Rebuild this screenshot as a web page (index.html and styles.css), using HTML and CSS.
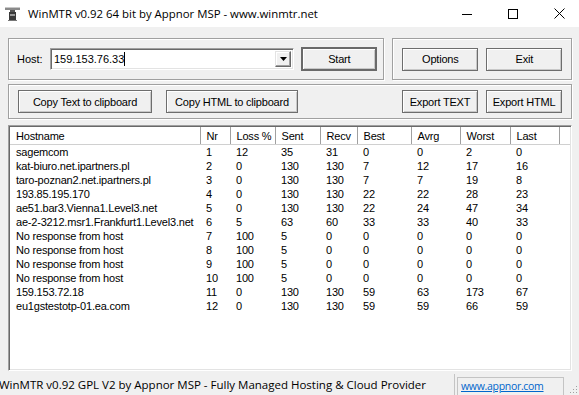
FILE: index.html
```html
<!DOCTYPE html>
<html lang="en">
<head>
    <meta charset="UTF-8">
    <title>WinMTR</title>
    <link rel="stylesheet" href="styles.css">
</head>
<body>

    <!-- Title Bar -->
    <div class="titlebar">
        <svg class="app-icon" viewBox="0 0 16 16">
            <rect x="0" y="1" width="15" height="3" fill="#8a8a8a"/>
            <rect x="0" y="1" width="15" height="1" fill="#c8c8c8"/>
            <rect x="5" y="4" width="5" height="2" fill="#555"/>
            <rect x="4" y="6" width="7" height="8" fill="#3a3a3a"/>
            <rect x="5" y="8" width="5" height="2" fill="#9a9a9a"/>
            <rect x="3" y="14" width="9" height="1" fill="#777"/>
        </svg>
        <span class="title">WinMTR v0.92 64 bit by Appnor MSP - www.winmtr.net</span>
        <div class="controls">
            <span class="ctrl">
                <svg width="10" height="10" viewBox="0 0 10 10"><rect x="0" y="5" width="10" height="1" fill="#000"/></svg>
            </span>
            <span class="ctrl">
                <svg width="10" height="10" viewBox="0 0 10 10"><rect x="0.5" y="0.5" width="9" height="9" fill="none" stroke="#000"/></svg>
            </span>
            <span class="ctrl">
                <svg width="11" height="11" viewBox="0 0 11 11"><path d="M0.5 0.5 L10.5 10.5 M10.5 0.5 L0.5 10.5" stroke="#000" stroke-width="1"/></svg>
            </span>
        </div>
    </div>

    <div class="main">
        <div class="top-row">
            <div class="group host-group">
                <span class="host-label">Host:</span>
                <div class="combo">
                    <span class="combo-text">159.153.76.33<span class="caret"></span></span>
                    <span class="combo-btn">
                        <svg width="7" height="4" viewBox="0 0 7 4"><path d="M0 0 H7 L3.5 4 Z" fill="#000"/></svg>
                    </span>
                </div>
                <button class="btn default">Start</button>
            </div>
            <div class="group action-group">
                <button class="btn">Options</button>
                <button class="btn">Exit</button>
            </div>
        </div>

        <div class="group export-group">
            <button class="btn copy-text">Copy Text to clipboard</button>
            <button class="btn copy-html">Copy HTML to clipboard</button>
            <span class="spacer"></span>
            <button class="btn">Export TEXT</button>
            <button class="btn">Export HTML</button>
        </div>

        <!-- Trace results -->
        <div class="listview">
            <table class="report">
                <colgroup>
                    <col class="c-host"><col class="c-nr"><col class="c-loss"><col class="c-sent"><col class="c-recv">
                    <col class="c-best"><col class="c-avrg"><col class="c-worst"><col class="c-last"><col>
                </colgroup>
                <thead>
                    <tr>
                        <th>Hostname</th><th>Nr</th><th>Loss %</th><th>Sent</th><th>Recv</th>
                        <th>Best</th><th>Avrg</th><th>Worst</th><th>Last</th><th class="filler"></th>
                    </tr>
                </thead>
                <tbody>
                    <tr><td>sagemcom</td><td>1</td><td>12</td><td>35</td><td>31</td><td>0</td><td>0</td><td>2</td><td>0</td><td></td></tr>
                    <tr><td>kat-biuro.net.ipartners.pl</td><td>2</td><td>0</td><td>130</td><td>130</td><td>7</td><td>12</td><td>17</td><td>16</td><td></td></tr>
                    <tr><td>taro-poznan2.net.ipartners.pl</td><td>3</td><td>0</td><td>130</td><td>130</td><td>7</td><td>7</td><td>19</td><td>8</td><td></td></tr>
                    <tr><td>193.85.195.170</td><td>4</td><td>0</td><td>130</td><td>130</td><td>22</td><td>22</td><td>28</td><td>23</td><td></td></tr>
                    <tr><td>ae51.bar3.Vienna1.Level3.net</td><td>5</td><td>0</td><td>130</td><td>130</td><td>22</td><td>24</td><td>47</td><td>34</td><td></td></tr>
                    <tr><td>ae-2-3212.msr1.Frankfurt1.Level3.net</td><td>6</td><td>5</td><td>63</td><td>60</td><td>33</td><td>33</td><td>40</td><td>33</td><td></td></tr>
                    <tr><td>No response from host</td><td>7</td><td>100</td><td>5</td><td>0</td><td>0</td><td>0</td><td>0</td><td>0</td><td></td></tr>
                    <tr><td>No response from host</td><td>8</td><td>100</td><td>5</td><td>0</td><td>0</td><td>0</td><td>0</td><td>0</td><td></td></tr>
                    <tr><td>No response from host</td><td>9</td><td>100</td><td>5</td><td>0</td><td>0</td><td>0</td><td>0</td><td>0</td><td></td></tr>
                    <tr><td>No response from host</td><td>10</td><td>100</td><td>5</td><td>0</td><td>0</td><td>0</td><td>0</td><td>0</td><td></td></tr>
                    <tr><td>159.153.72.18</td><td>11</td><td>0</td><td>130</td><td>130</td><td>59</td><td>63</td><td>173</td><td>67</td><td></td></tr>
                    <tr><td>eu1gstestotp-01.ea.com</td><td>12</td><td>0</td><td>130</td><td>130</td><td>59</td><td>59</td><td>66</td><td>59</td><td></td></tr>
                </tbody>
            </table>
        </div>
    </div>

    <!-- Status Bar -->
    <div class="statusbar">
        <span class="status-main">WinMTR v0.92 GPL V2 by Appnor MSP - Fully Managed Hosting &amp; Cloud Provider</span>
        <span class="status-link"><a href="#">www.appnor.com</a></span>
        <svg class="grip" width="12" height="12" viewBox="0 0 12 12">
            <rect x="9" y="3" width="1" height="1" fill="#a0a0a0"/>
            <rect x="6" y="6" width="1" height="1" fill="#a0a0a0"/>
            <rect x="9" y="6" width="1" height="1" fill="#a0a0a0"/>
            <rect x="3" y="9" width="1" height="1" fill="#a0a0a0"/>
            <rect x="6" y="9" width="1" height="1" fill="#a0a0a0"/>
            <rect x="9" y="9" width="1" height="1" fill="#a0a0a0"/>
        </svg>
    </div>

</body>
</html>
```

FILE: styles.css
```css
/* Reset */
* {
    margin: 0;
    padding: 0;
    box-sizing: border-box;
}

body {
    width: 579px;
    height: 395px;
    overflow: hidden;
    background: #f0f0f0;
    color: #000;
    font-family: "Liberation Sans", Arial, sans-serif;
    font-size: 11px;
    display: flex;
    flex-direction: column;
}

/* Title Bar */
.titlebar {
    height: 27px;
    flex: none;
    background: #fff;
    display: flex;
    align-items: center;
    font-family: "Open Sans", "Noto Sans", sans-serif;
    font-size: 11.4px;
}

.app-icon {
    width: 16px;
    height: 16px;
    margin: 0 7px 0 5px;
}

.title {
    flex: 1;
    white-space: nowrap;
}

.controls {
    display: flex;
    height: 100%;
    margin-right: -3px;
}

.ctrl {
    width: 46px;
    display: flex;
    align-items: center;
    justify-content: center;
}

/* Main area */
.main {
    padding: 0 7px 0 8px;
    display: flex;
    flex-direction: column;
}

.top-row {
    display: flex;
    gap: 8px;
    margin-top: 11px;
    height: 42px;
}

.group {
    border: 1px solid #a0a0a0;
    box-shadow: inset 1px 1px 0 #fff, 1px 1px 0 #fff;
    display: flex;
    align-items: center;
}

.host-group {
    width: 377px;
    padding: 0 6px 0 8px;
}

.host-label {
    width: 33px;
}

.combo {
    width: 244px;
    height: 22px;
    display: flex;
    background: #fff;
    border: 1px solid;
    border-color: #a0a0a0 #fff #fff #a0a0a0;
    box-shadow: inset 1px 1px 0 #696969, inset -1px -1px 0 #e3e3e3;
    padding: 2px;
}

.combo-text {
    flex: 1;
    padding-left: 1px;
    line-height: 16px;
    white-space: nowrap;
}

.caret {
    display: inline-block;
    width: 1px;
    height: 14px;
    background: #000;
    vertical-align: -3px;
}

.combo-btn {
    width: 16px;
    background: #f0f0f0;
    border: 1px solid;
    border-color: #e3e3e3 #696969 #696969 #e3e3e3;
    box-shadow: inset -1px -1px 0 #a0a0a0, inset 1px 1px 0 #fff;
    display: flex;
    align-items: center;
    justify-content: center;
}

.action-group {
    width: 180px;
    padding-left: 9px;
    gap: 8px;
}

/* Buttons */
.btn {
    width: 76px;
    height: 23px;
    background: #f0f0f0;
    border: 1px solid #6d6d6d;
    box-shadow: inset 1px 1px 0 #fff, inset -1px -1px 0 #c8c8c8;
    font-family: "Liberation Sans", Arial, sans-serif;
    font-size: 11px;
    letter-spacing: -0.2px;
    color: #000;
}

.btn.default {
    height: 24px;
    margin-left: auto;
    border: 2px solid #6a6a6a;
}

.export-group {
    margin-top: 4px;
    height: 35px;
    padding: 0 9px;
    gap: 8px;
}

.copy-text {
    width: 134px;
}

.copy-html {
    width: 132px;
    margin-left: 6px;
}

.spacer {
    flex: 1;
}

/* List View */
.listview {
    margin-top: 6px;
    height: 246px;
    background: #fff;
    border: 1px solid;
    border-color: #a0a0a0 #fff #fff #a0a0a0;
    box-shadow: inset 1px 1px 0 #696969, inset -1px -1px 0 #e3e3e3;
    padding: 1px;
    overflow: hidden;
}

.report {
    width: 100%;
    table-layout: fixed;
    border-collapse: collapse;
    letter-spacing: -0.2px;
}

.c-host { width: 190px; }
.c-nr { width: 30px; }
.c-loss { width: 45px; }
.c-sent { width: 45px; }
.c-recv { width: 37px; }
.c-best { width: 54px; }
.c-avrg { width: 49px; }
.c-worst { width: 50px; }
.c-last { width: 49px; }

.report th {
    height: 17px;
    padding: 2px 6px 0;
    font-weight: normal;
    text-align: left;
    border-right: 1px solid #a0a0a0;
    border-bottom: 1px solid #d0d0d0;
    white-space: nowrap;
    overflow: hidden;
}

.report th.filler {
    border-right: none;
}

.report td {
    height: 14px;
    line-height: 14px;
    padding: 0 6px;
    white-space: nowrap;
    overflow: hidden;
}

/* Status Bar */
.statusbar {
    margin-top: auto;
    height: 21px;
    flex: none;
    display: flex;
    font-family: "Open Sans", "Noto Sans", sans-serif;
    font-size: 11.5px;
    position: relative;
}

.status-main {
    width: 455px;
    border-right: 1px solid #c4c4c4;
    text-indent: -1px;
    padding-top: 3px;
    white-space: nowrap;
    overflow: hidden;
}

.status-link {
    width: 107px;
    margin-left: 2px;
    margin-top: 3px;
    border: 1px solid #c4c4c4;
    border-bottom: none;
    padding: 1px 0 0 3px;
    font-size: 10.5px;
    letter-spacing: -0.3px;
    white-space: nowrap;
}

.status-link a {
    color: #0066cc;
}

.grip {
    position: absolute;
    right: 0;
    bottom: 0;
}
```
